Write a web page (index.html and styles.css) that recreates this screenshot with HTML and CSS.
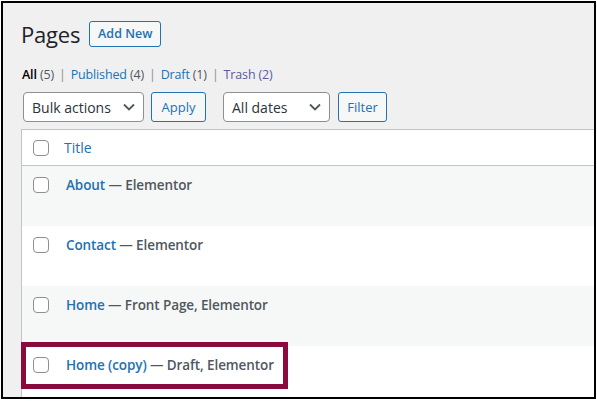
FILE: index.html
```html
<!DOCTYPE html>
<html lang="en">
<head>
    <meta charset="UTF-8">
    <title>Pages</title>
    <link rel="stylesheet" href="styles.css">
</head>
<body>

    <div class="screen">
        <div class="wrap">
            <div class="page-head">
                <h1>Pages</h1>
                <a class="add-new">Add New</a>
            </div>

            <ul class="subsubsub">
                <li class="current">All <span class="count">(5)</span></li>
                <li class="sep">|</li>
                <li><a>Published <span class="count">(4)</span></a></li>
                <li class="sep">|</li>
                <li><a>Draft <span class="count">(1)</span></a></li>
                <li class="sep">|</li>
                <li><a class="visited">Trash <span class="count">(2)</span></a></li>
            </ul>

            <div class="tablenav">
                <div class="select bulk">
                    <span>Bulk actions</span>
                    <svg class="chevron" width="12" height="8" viewBox="0 0 12 8"><polyline points="1,1.5 6,6.5 11,1.5" fill="none" stroke="#50575e" stroke-width="1.8"/></svg>
                </div>
                <button class="btn apply">Apply</button>
                <div class="select dates">
                    <span>All dates</span>
                    <svg class="chevron" width="12" height="8" viewBox="0 0 12 8"><polyline points="1,1.5 6,6.5 11,1.5" fill="none" stroke="#50575e" stroke-width="1.8"/></svg>
                </div>
                <button class="btn filter">Filter</button>
            </div>

            <div class="list">
                <div class="row head">
                    <span class="check"></span>
                    <a class="col-title">Title</a>
                </div>
                <div class="row alt">
                    <span class="check"></span>
                    <span class="row-title"><a>About</a> — Elementor</span>
                </div>
                <div class="row">
                    <span class="check"></span>
                    <span class="row-title"><a>Contact</a> — Elementor</span>
                </div>
                <div class="row alt">
                    <span class="check"></span>
                    <span class="row-title"><a>Home</a> — Front Page, Elementor</span>
                </div>
                <div class="row">
                    <span class="check"></span>
                    <span class="row-title"><a>Home (copy)</a> — Draft, Elementor</span>
                </div>
            </div>
        </div>

        <!-- 高亮框 -->
        <div class="highlight"></div>
    </div>

</body>
</html>
```

FILE: styles.css
```css
/* 页面背景 */
body {
    margin: 0;
    background: #fff;
    font-family: "Open Sans", "Noto Sans", sans-serif;
}

/* 外框 */
.screen {
    position: relative;
    margin: 1px 0 0 1px;
    width: 595px;
    height: 398px;
    box-sizing: border-box;
    border: 2px solid #000;
    background: #f0f0f1;
    overflow: hidden;
}

.wrap {
    padding-left: 18px;
}

/* 标题 */
.page-head {
    display: flex;
    align-items: center;
    margin-top: 18px;
    height: 26px;
}

.page-head h1 {
    margin: 0;
    font-size: 22px;
    font-weight: 400;
    line-height: 26px;
    letter-spacing: -0.2px;
    color: #1d2327;
}

.add-new {
    margin-left: 9px;
    width: 72px;
    height: 26px;
    box-sizing: border-box;
    border: 1px solid #2271b1;
    border-radius: 3px;
    background: #f6f7f7;
    color: #2271b1;
    font-size: 12.5px;
    font-weight: 600;
    line-height: 24px;
    text-align: center;
}

/* 状态筛选 */
.subsubsub {
    display: flex;
    list-style: none;
    margin: 19px 0 0 1px;
    padding: 0;
    font-size: 12.5px;
    line-height: 18px;
    letter-spacing: -0.15px;
    color: #50575e;
}

.subsubsub li.current {
    color: #000;
    font-weight: 600;
}

.subsubsub .count {
    font-weight: 400;
    color: #50575e;
}

.subsubsub a {
    color: #2271b1;
}

.subsubsub a.visited,
.subsubsub a.visited .count {
    color: #5a5ba3;
}

.subsubsub .sep {
    margin: 0 5px;
    color: #8c8f94;
}

/* 批量操作 */
.tablenav {
    display: flex;
    margin-top: 8px;
    height: 30px;
}

.select {
    display: flex;
    align-items: center;
    justify-content: space-between;
    box-sizing: border-box;
    height: 30px;
    padding: 0 8px;
    border: 1px solid #8c8f94;
    border-radius: 4px;
    background: #fff;
    color: #2c3338;
    font-size: 14px;
}

.select.bulk {
    width: 121px;
    margin-left: 2px;
}

.select.dates {
    width: 107px;
    margin-left: 17px;
}

.btn {
    box-sizing: border-box;
    height: 30px;
    margin-left: 7px;
    padding: 0;
    border: 1px solid #2271b1;
    border-radius: 3px;
    background: #f6f7f7;
    color: #2271b1;
    font-family: inherit;
    font-size: 13px;
}

.btn.apply {
    width: 55px;
}

.btn.filter {
    width: 49px;
    margin-left: 8px;
}

/* 列表 */
.list {
    margin-top: 7px;
    width: 600px;
    border: 1px solid #c3c4c7;
    background: #fff;
}

.row {
    display: flex;
    align-items: flex-start;
    height: 60px;
    box-sizing: border-box;
    padding: 11px 0 0 11px;
    font-size: 13.5px;
    line-height: 16px;
}

.row.alt {
    background: #f6f7f7;
}

.row.head {
    height: 36px;
    padding-top: 10px;
    border-bottom: 1px solid #c3c4c7;
    font-size: 14px;
}

.check {
    flex: none;
    width: 16px;
    height: 16px;
    box-sizing: border-box;
    border: 1px solid #8c8f94;
    border-radius: 4px;
    background: #fff;
}

.col-title {
    margin-left: 15px;
    color: #2271b1;
}

.row-title {
    margin-left: 17px;
    font-weight: 600;
    letter-spacing: -0.1px;
    color: #50575e;
}

.row-title a {
    color: #2271b1;
}

/* 高亮框 */
.highlight {
    position: absolute;
    left: 18px;
    top: 339px;
    width: 267px;
    height: 47px;
    box-sizing: border-box;
    border: 5px solid #8b0a3e;
}
```
